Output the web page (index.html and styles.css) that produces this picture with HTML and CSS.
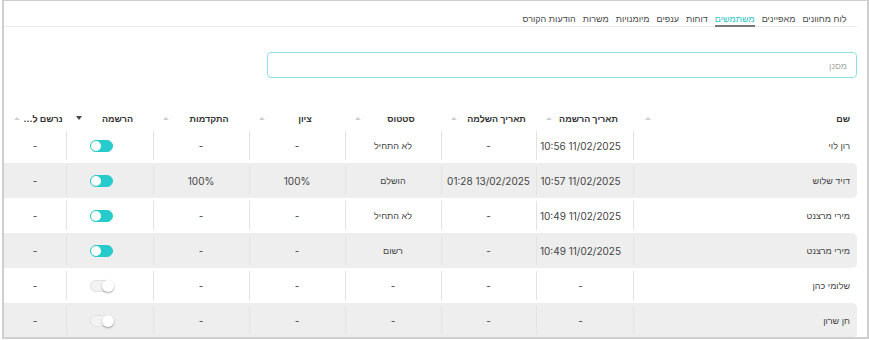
FILE: index.html
```html
<!DOCTYPE html>
<html lang="he" dir="rtl">
<head>
    <meta charset="UTF-8">
    <meta name="viewport" content="width=device-width, initial-scale=1.0">
    <title>משתמשים</title>
    <link rel="stylesheet" href="styles.css">
</head>
<body>
    <div class="frame">
        <nav class="tabs">
            <a class="tab">לוח מחוונים</a>
            <a class="tab">מאפיינים</a>
            <a class="tab active">משתמשים</a>
            <a class="tab">דוחות</a>
            <a class="tab">ענפים</a>
            <a class="tab">מיומנויות</a>
            <a class="tab">משרות</a>
            <a class="tab">הודעות הקורס</a>
        </nav>

        <input class="filter" type="text" placeholder="מסנן">

        <div class="table">
            <div class="row head">
                <div class="cell name"><span class="label">שם</span><span class="sort"></span></div>
                <div class="cell reg"><span class="label">תאריך הרשמה</span><span class="sort"></span></div>
                <div class="cell"><span class="label">תאריך השלמה</span><span class="sort"></span></div>
                <div class="cell"><span class="label">סטטוס</span><span class="sort"></span></div>
                <div class="cell"><span class="label">ציון</span><span class="sort"></span></div>
                <div class="cell"><span class="label">התקדמות</span><span class="sort"></span></div>
                <div class="cell"><span class="label">הרשמה</span><span class="sort down"></span></div>
                <div class="cell"><span class="label">נרשם ל...</span><span class="sort"></span></div>
            </div>

            <div class="row">
                <div class="cell name">רון לוי</div>
                <div class="cell num reg">11/02/2025 10:56</div>
                <div class="cell num">-</div>
                <div class="cell">לא התחיל</div>
                <div class="cell num">-</div>
                <div class="cell num">-</div>
                <div class="cell toggle"><span class="switch on"></span></div>
                <div class="cell num">-</div>
            </div>
            <div class="row alt">
                <div class="cell name">דויד שלוש</div>
                <div class="cell num reg">11/02/2025 10:57</div>
                <div class="cell num">13/02/2025 01:28</div>
                <div class="cell">הושלם</div>
                <div class="cell num">100%</div>
                <div class="cell num">100%</div>
                <div class="cell toggle"><span class="switch on"></span></div>
                <div class="cell num">-</div>
            </div>
            <div class="row">
                <div class="cell name">מירי מרצנט</div>
                <div class="cell num reg">11/02/2025 10:49</div>
                <div class="cell num">-</div>
                <div class="cell">לא התחיל</div>
                <div class="cell num">-</div>
                <div class="cell num">-</div>
                <div class="cell toggle"><span class="switch on"></span></div>
                <div class="cell num">-</div>
            </div>
            <div class="row alt">
                <div class="cell name">מירי מרצנט</div>
                <div class="cell num reg">11/02/2025 10:49</div>
                <div class="cell num">-</div>
                <div class="cell">רשום</div>
                <div class="cell num">-</div>
                <div class="cell num">-</div>
                <div class="cell toggle"><span class="switch on"></span></div>
                <div class="cell num">-</div>
            </div>
            <div class="row">
                <div class="cell name">שלומי כהן</div>
                <div class="cell num reg">-</div>
                <div class="cell num">-</div>
                <div class="cell num">-</div>
                <div class="cell num">-</div>
                <div class="cell num">-</div>
                <div class="cell toggle"><span class="switch"></span></div>
                <div class="cell num">-</div>
            </div>
            <div class="row alt">
                <div class="cell name">חן שרון</div>
                <div class="cell num reg">-</div>
                <div class="cell num">-</div>
                <div class="cell num">-</div>
                <div class="cell num">-</div>
                <div class="cell num">-</div>
                <div class="cell toggle"><span class="switch"></span></div>
                <div class="cell num">-</div>
            </div>
        </div>
    </div>
</body>
</html>
```

FILE: styles.css
```css
body {
    margin: 0;
    font-family: Inter, "Liberation Sans", sans-serif;
    color: #444;
    background: #fff;
}
.frame {
    width: 853px;
    height: 336px;
    padding-right: 10px;
    border: 2px solid #cfcfcf;
    border-top-width: 1px;
    overflow: hidden;
    direction: rtl;
}
.tabs {
    display: flex;
    padding: 12px 7px 0 0;
    border-bottom: 1px solid #ececec;
}
.tab {
    margin: 0 3.5px;
    font-size: 9px;
    line-height: 12px;
    color: #4a4a4a;
}
.tab.active {
    color: #2bc3c6;
    border-bottom: 2px solid #777;
    margin-bottom: -1px;
}
.filter {
    display: block;
    margin-top: 25px;
    width: 590px;
    height: 26px;
    box-sizing: border-box;
    border: 1.5px solid #8fe2e4;
    border-radius: 4px;
    padding: 0 9px;
    font-family: inherit;
    font-size: 9px;
    outline: none;
}
.filter::placeholder {
    color: #a8a8a8;
}
.table {
    margin-top: 30px;
}
.row {
    display: grid;
    grid-template-columns: 224px 97px 95px 96px 96px 96px 87px 62px;
    height: 35px;
    align-items: center;
    border-radius: 0 5px 5px 0;
}
.row.alt {
    background: #eeeeee;
}
.cell {
    position: relative;
    height: 100%;
    display: flex;
    align-items: center;
    justify-content: center;
    font-size: 9px;
    white-space: nowrap;
}
.cell.num {
    font-size: 10px;
}
.cell.reg {
    padding-right: 8px;
}
.row:not(.head) .cell:not(:last-child)::after {
    content: "";
    position: absolute;
    left: 0;
    top: 3px;
    bottom: 3px;
    width: 1px;
    background: #e3e3e3;
}
.cell.name {
    justify-content: flex-start;
    padding-right: 7px;
}
.row.head {
    height: 20px;
}
.head .cell {
    padding-left: 10px;
    font-weight: bold;
    color: #333;
}
.head .label {
    flex: 1;
    text-align: center;
}
.head .cell.name {
    padding-left: 12px;
}
.head .cell.name .label {
    text-align: right;
}
.sort {
    width: 0;
    height: 0;
    border-left: 3px solid transparent;
    border-right: 3px solid transparent;
    border-bottom: 3px solid #cfcfcf;
}
.sort.down {
    border-bottom: none;
    border-left-width: 3.5px;
    border-right-width: 3.5px;
    border-top: 4px solid #444;
}
.cell.toggle {
    padding-right: 16px;
}
.switch {
    position: relative;
    width: 23px;
    height: 12px;
    box-sizing: border-box;
    border-radius: 6px;
    background: #f3f3f3;
    border: 1px solid #e2e2e2;
}
.switch::before {
    content: "";
    position: absolute;
    top: -1px;
    right: -2px;
    width: 12px;
    height: 12px;
    border-radius: 50%;
    background: #fff;
    box-shadow: 0 1px 2px rgba(0, 0, 0, 0.35);
}
.switch.on {
    background: #27cbcb;
    border-color: #27cbcb;
}
.switch.on::before {
    top: 0;
    right: auto;
    left: 0;
    width: 10px;
    height: 10px;
    box-shadow: none;
}
```
